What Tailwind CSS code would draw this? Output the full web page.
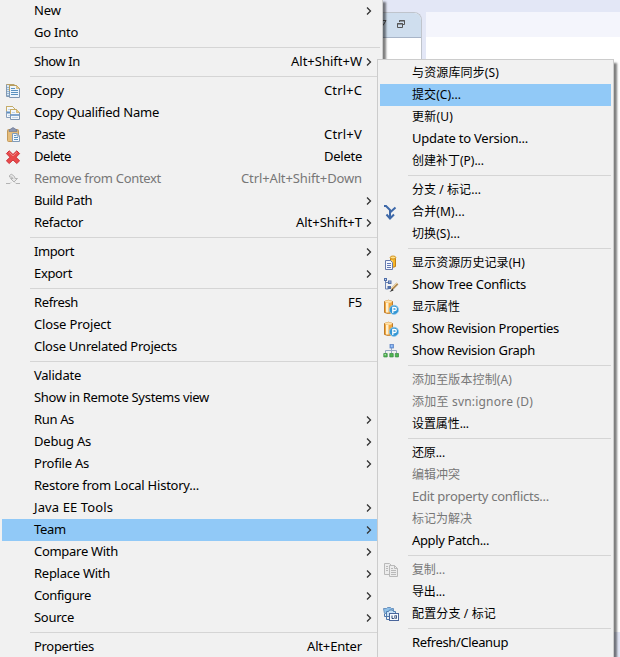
<!DOCTYPE html>
<html lang="zh"><head><meta charset="utf-8"><title>Context menu</title>
<script src="https://cdn.jsdelivr.net/npm/@tailwindcss/browser@4"></script></head>
<body class="w-[620px] h-[657px] overflow-hidden relative bg-[#e3e7f6] text-[13px] text-black font-['Noto_Sans','Noto_Sans_CJK_SC',sans-serif]">
<!-- workbench behind the menus -->
<div class="flex h-[657px] pl-[374px] pt-3">
  <div class="w-12 h-[620px] shrink-0 rounded-tr-lg border-t border-r border-[#bfc4cc] bg-white overflow-hidden">
    <div class="h-[25px] bg-[#cfdeee] border-b border-[#a8b5c8] flex items-center">
      <svg class="w-[47px] h-6" viewBox="374 13 47 24" fill="none" stroke="#555" stroke-width="1"><path d="M380 20.500h6l-3 5"/><path d="M399.500 22v-1.500h5v4h-2M399 21h6" /><path d="M397.500 23.500h5v4h-5zM397 24h6"/></svg>
    </div>
  </div>
  <div class="w-1 shrink-0"></div>
  <div class="grow h-[620px] bg-white"><div class="h-[25px] bg-[#f4f5fc]"></div></div>
</div>

<div id="main" class="absolute left-0 top-0 w-[383px] h-[658px] bg-[#f1f1f1] border-r border-[#cccccc] shadow-[3px_2px_2px_rgba(0,0,0,0.5)]"></div>
<div id="team" class="absolute left-[377px] top-[59px] w-[237px] h-[610px] pt-0.5 bg-[#f1f1f1] border border-[#cccccc] shadow-[3px_4px_2px_rgba(0,0,0,0.5)]"></div>

<template id="i-copy"><svg width="16" height="16" viewBox="0 0 16 16"><path d="M1.500 1.500h6v12h-6z" fill="#dce9f5" stroke="#8298b1"/><path d="M1.500 1.500h8" stroke="#b8a16a"/><path d="M3 4v9" stroke="#4c84b4" stroke-dasharray="1 1"/><path d="M4.500 2.500h7l3 3v9h-10z" fill="#edf5fc" stroke="#7e96b2"/><path d="M4.500 8v-5.500h7l3 3" fill="none" stroke="#b89d5c"/><path d="M11.500 2.500v3h3z" fill="#e4c98b" stroke="#c7a55c" stroke-width=".6"/><path d="M6 5.500h4M6 7.500h7M6 9.500h7M6 11.500h7" stroke="#5b91bf"/></svg></template>
<template id="i-copyq"><svg width="16" height="16" viewBox="0 0 16 16"><path d="M1.500 1.500h6l3 3v8h-9z" fill="#f3f7fb" stroke="#8ba0bb"/><path d="M1.500 6v-4.500h6l3 3" fill="none" stroke="#c7ac65"/><path d="M3 4.500h3M3 10.500h3" stroke="#c1d4e8"/><path d="M2 7.500h4" stroke="#5f8fc0" stroke-width="2"/><path d="M6.500 4.500h5l3 3v7h-9v-10z" fill="#f3f7fb" stroke="#7e96b2"/><path d="M5.500 9v-4.500h6l3 3" fill="none" stroke="#c7ac65"/><path d="M11.500 4.500v3h3" fill="#e4c98b" stroke="#c7a55c" stroke-width=".7"/><path d="M7 7.500h3M7 12.500h6" stroke="#c1d4e8"/><path d="M6 10h8" stroke="#6390c2" stroke-width="1.600"/></svg></template>
<template id="i-paste"><svg width="16" height="16" viewBox="0 0 16 16"><rect x="2.500" y="2.500" width="11" height="12" rx="1" fill="#e5bd7c" stroke="#c49a5a"/><path d="M4 4.500V3l2-1.200Q8 -.6 10 1.800L12 3v1.500z" fill="#8b96b1" stroke="#69758f" stroke-width=".6"/><path d="M7.500 6.500h4.500l2.500 2.500v5.500h-7z" fill="#f3f8fd" stroke="#7f9ab8"/><path d="M12 6.500v2.500h2.500" fill="none" stroke="#7f9ab8"/><path d="M9 8.500h2M9 10.500h4M9 12.500h4" stroke="#5f94bf"/></svg></template>
<template id="i-delete"><svg width="16" height="16" viewBox="0 0 16 16"><path d="M4.200 1.800 8 5.500l3.800-3.700 2.800 2.800L11 8.300l3.600 3.500-2.800 2.700L8 11l-3.800 3.500-2.800-2.700L5 8.300 1.400 4.600z" fill="#e84a4b" stroke="#cf343c" stroke-linejoin="round"/><path d="M4.200 3.300 8 7l3.800-3.700" fill="none" stroke="#f08582"/></svg></template>
<template id="i-remove"><svg width="16" height="16" viewBox="0 0 16 16" fill="none" stroke="#b3b3b3"><path d="M4.500 6V4.500Q6 2 8.500 4.500Q10 6 10 7.500h2.500L9 11 5.500 7.500H8Q7.500 5.500 4.500 6z" fill="#e7e7e7"/><path d="M1 12.500h4l1-1M15 12.500h-4l-1-1"/></svg></template>
<template id="i-merge"><svg width="16" height="16" viewBox="0 0 16 16" fill="none" stroke="#3d68a8" stroke-width="2"><path d="M1 2h2l4 4v9M12.500 3.500 7 8.500M3.500 10.500 7 14.500l4-4"/></svg></template>
<template id="i-history"><svg width="16" height="16" viewBox="0 0 16 16"><path d="M7.500 2.500v9q3 1.500 5 0v-9" fill="#f4b52b" stroke="#c48116"/><ellipse cx="10" cy="2.500" rx="2.800" ry="1.500" fill="#ffe38c" stroke="#d39320"/><path d="M9 5v5" stroke="#ffe79b"/><path d="M2.500 5.500h5l2 2v7h-7z" fill="#f4f7ff" stroke="#687bac"/><path d="M4 8.500h4M4 10.500h4M4 12.500h4" stroke="#6379b4"/></svg></template>
<template id="i-tree"><svg width="16" height="16" viewBox="0 0 16 16"><path d="M2.500 2v10h3M3 5.500h3" fill="none" stroke="#6b83b3"/><path d="M1 1h3v3H1zM5 3.500h3.500V7H5zM4.500 9h3.500v3H4.500z" fill="#506ea8"/><path d="M2 2h1v1H2zM6 4.500h1.500v1H6z" fill="#c9daf4"/><path d="m14.500 6.500-6 6" stroke="#b28b55" stroke-width="2.500"/><path d="m14 6-6 6" stroke="#f0d6a2"/><path d="m9.500 11.500-3 3.500 4-1.500z" fill="#383838"/></svg></template>
<template id="i-prop"><svg width="16" height="16" viewBox="0 0 16 16"><path d="M1.500 2.500q4-2.500 8 0v11q-4 2-8 0z" fill="#f3a83e" stroke="#bd7b2a"/><path d="M3 4h2.500v9.500H3z" fill="#fff0cf"/><ellipse cx="5.500" cy="2.500" rx="3.500" ry="1.300" fill="#ffe2ab"/><circle cx="11" cy="10.800" r="4.600" fill="#3296d4" stroke="#8fc8ee" stroke-width=".8"/><path d="M9.800 14V8.500h2q1.500 0 1.500 1.500t-1.500 1.500h-2" fill="none" stroke="#fff" stroke-width="1.300"/></svg></template>
<template id="i-graph"><svg width="16" height="16" viewBox="0 0 16 16"><path d="M8.500 5v5M2.500 10V7.500h11v2.500" fill="none" stroke="#9aa9c2"/><rect x="7" y="1.500" width="3.500" height="3.500" fill="#6fa2ea" stroke="#5f84c4" stroke-width=".8"/><path d="M8 2.500h1.500v1H8z" fill="#c6defc"/><path d="M.8 10.500h3.400v3.400H.8zM6.800 10.500h3.400v3.400H6.800zM12.300 10.500h3.200v3.400h-3.200z" fill="#4eb650" stroke="#3f8f48" stroke-width=".8"/><path d="M1.500 11.300h1.500v1H1.500z" fill="#c7efb9"/></svg></template>
<template id="i-copyd"><svg width="16" height="16" viewBox="0 0 16 16" stroke="#b9b9b9" fill="#ececec"><path d="M1.500 1.500h5l2 2v9h-7z"/><path d="M6.500 3.500h5l3 3v8h-8z"/><path d="M11.500 3.500v3h3M3 4.500h2M3 6.500h2M3 8.500h2M8 6.500h2M8 8.500h5M8 10.500h5M8 12.500h5" fill="none"/></svg></template>
<template id="i-branch"><svg width="16" height="16" viewBox="0 0 16 16"><path d="M.5 2.500h3l1-1h3l1 1h2v5h-9z" fill="#8dc0e9" stroke="#6d93be"/><path d="M3.500 5.500h2l1-1.500h3l1 1.500h2v5h-9z" fill="#c9e2f7" stroke="#507cae"/><path d="M1.500 8v2.500h2M3.500 10v3.500h3" fill="none" stroke="#4d77ac"/><rect x="6.500" y="7.500" width="9" height="7" fill="#f7faff" stroke="#4a659b"/><path d="M9 9.500v3h1.800" fill="none" stroke="#26406e"/><rect x="11.800" y="9.800" width="1.800" height="2.400" fill="none" stroke="#26406e" stroke-width=".8"/></svg></template>

<script>
// Entry: [label, label width, {icon, key, kw, arrow, disabled, selected}]; null is a separator.
const mainItems = [
 ["New",27,{arrow:1}],["Go Into",44],null,["Show In",46,{key:"Alt+Shift+W",kw:71,arrow:1}],null,
 ["Copy",30,{icon:"copy",key:"Ctrl+C",kw:38}],["Copy Qualified Name",125,{icon:"copyq"}],["Paste",31,{icon:"paste",key:"Ctrl+V",kw:38}],
 ["Delete",37,{icon:"delete",key:"Delete",kw:38}],["Remove from Context",127,{icon:"remove",key:"Ctrl+Alt+Shift+Down",kw:121,disabled:1}],
 ["Build Path",58,{arrow:1}],["Refactor",49,{key:"Alt+Shift+T",kw:66,arrow:1}],null,["Import",40,{arrow:1}],["Export",38,{arrow:1}],null,
 ["Refresh",44,{key:"F5",kw:14}],["Close Project",77],["Close Unrelated Projects",143],null,["Validate",47],["Show in Remote Systems view",175],
 ["Run As",40,{arrow:1}],["Debug As",57,{arrow:1}],["Profile As",55,{arrow:1}],["Restore from Local History...",165],["Java EE Tools",79,{arrow:1}],
 ["Team",32,{arrow:1,selected:1}],["Compare With",84,{arrow:1}],["Replace With",76,{arrow:1}],["Configure",57,{arrow:1}],["Source",40,{arrow:1}],null,
 ["Properties",60,{key:"Alt+Enter",kw:55}]];
const teamItems = [
 ["与资源库同步(S)",87],["提交(C)...",49,{selected:1}],["更新(U)",41],["Update to Version...",116],["创建补丁(P)...",72],null,
 ["分支 / 标记...",69],["合并(M)...",53,{icon:"merge"}],["切换(S)...",48],null,
 ["显示资源历史记录(H)",113,{icon:"history"}],["Show Tree Conflicts",114,{icon:"tree"}],["显示属性",48,{icon:"prop"}],["Show Revision Properties",147,{icon:"prop"}],["Show Revision Graph",123,{icon:"graph"}],null,
 ["添加至版本控制(A)",100,{disabled:1}],["添加至 svn:ignore (D)",121,{disabled:1}],["设置属性...",57],null,
 ["还原...",33],["编辑冲突",48,{disabled:1}],["Edit property conflicts...",137,{disabled:1}],["标记为解决",60,{disabled:1}],["Apply Patch...",77],null,
 ["复制...",33,{icon:"copyd",disabled:1}],["导出...",33],["配置分支 / 标记",84,{icon:"branch"}],null,["Refresh/Cleanup",96]];
const pen = document.createElement("canvas").getContext("2d");
function label(text, w) {
  const cjk = /[\u4e00-\u9fff]/.test(text);
  pen.font = (cjk ? "12px" : "13px") + ' "Noto Sans", "Noto Sans CJK SC", sans-serif';
  const s = (w - pen.measureText(text).width) / text.length;
  return `<span class="${cjk ? "text-[12px]" : "mb-0.5"}" style="letter-spacing:${s.toFixed(3)}px">${text}</span>`;
}
function build(id, items, sub) {
  const menu = document.getElementById(id);
  for (const it of items) {
    const row = document.createElement("div");
    if (!it) {
      row.className = "h-[7px] pt-[3px] pl-[30px] pr-0.5";
      row.innerHTML = '<div class="h-px bg-[#d5d5d5]"></div>';
      menu.append(row); continue;
    }
    const [text, w, o = {}] = it;
    row.className = "h-[22px] mx-0.5 flex items-center whitespace-nowrap leading-[22px] " + (o.selected ? "bg-[#91c9f7] " : "") + (o.disabled ? "text-[#777777]" : "");
    row.innerHTML = `<span class="w-8 shrink-0 flex pl-[3px]">${o.icon ? document.getElementById("i-" + o.icon).innerHTML : ""}</span>`
      + label(text, w)
      + (sub ? "" : `<span class="grow flex justify-end">${o.key ? label(o.key, o.kw) : ""}</span><span class="w-[18px] shrink-0 flex pl-[3px]">${o.arrow ? '<svg width="8" height="8" viewBox="0 0 8 8" fill="none" stroke="#333" stroke-width="1.300"><path d="m2 .5 3.500 3.500-3.500 3.500"/></svg>' : ""}</span>`);
    menu.append(row);
  }
}
build("main", mainItems, false);
build("team", teamItems, true);
</script>
</body></html>
